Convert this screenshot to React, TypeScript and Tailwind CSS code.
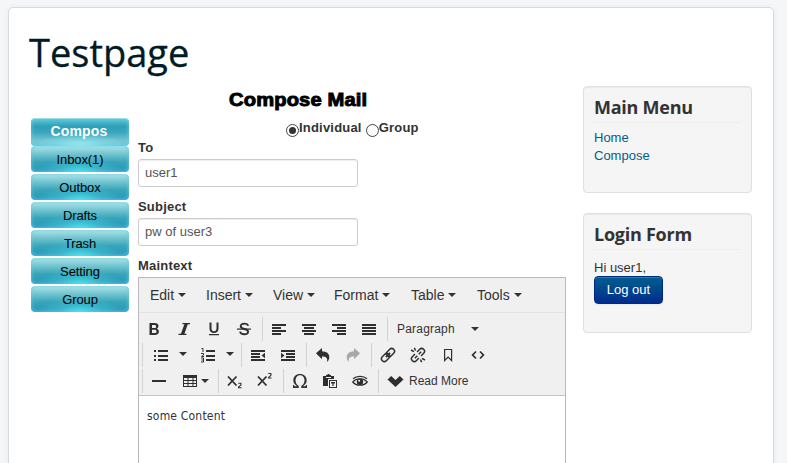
import type { ReactNode } from 'react';

const ink = '#2f2f2f';

function Svg({ children, w = 16, color = ink }: { children: ReactNode; w?: number; color?: string }) {
  return (
    <svg width={w} height={16} viewBox={`0 0 ${w} 16`} fill={color} className="block shrink-0" style={{ color }}>
      {children}
    </svg>
  );
}

function Caret({ className = '' }: { className?: string }) {
  return <span className={`block h-0 w-0 shrink-0 border-x-4 border-t-4 border-x-transparent border-t-[#333] ${className}`} />;
}

function Sep() {
  return <span className="ml-[3px] mr-px h-6 w-px shrink-0 bg-[#d2d2d2]" />;
}

function Cell({ children }: { children: ReactNode }) {
  return <button className="flex h-6 w-[30px] shrink-0 items-center justify-center">{children}</button>;
}

function Lines({ rows }: { rows: [number, number][] }) {
  return (
    <Svg>
      {rows.map(([x, w], i) => (
        <rect key={i} x={x} y={3 + i * 3} width={w} height={2} />
      ))}
    </Svg>
  );
}

function Indent({ inward }: { inward: boolean }) {
  return (
    <Svg>
      <path d="M1 3h14v2H1zM1 12h14v2H1z" />
      {inward ? (
        <path d="M6 6h9v2H6zM6 9h9v2H6zM1 5.7 4.5 8.5 1 11.3z" />
      ) : (
        <path d="M1 6h9v2H1zM1 9h9v2H1zM15 5.7 11.5 8.5 15 11.3z" />
      )}
    </Svg>
  );
}

const undoPath = 'M1 6.300 7 1v3.200c4.500.1 7.300 2.200 7.300 5.800 0 2.200-.9 3.900-2.300 5 .8-3.800-.6-5.500-5-5.500v2.800z';

const Undo = () => <Svg><path d={undoPath} /></Svg>;
const Redo = () => <Svg color="#a8a8a8"><path d={undoPath} transform="translate(16 0) scale(-1 1)" /></Svg>;

const Link = () => (
  <Svg>
    <g fill="none" stroke="currentColor" strokeWidth="1.500" transform="rotate(-45 8 8)">
      <rect x="0" y="5.200" width="9" height="5.600" rx="2.800" />
      <rect x="7" y="5.200" width="9" height="5.600" rx="2.800" />
      <path d="M5 8h6" />
    </g>
  </Svg>
);

const Unlink = () => (
  <Svg>
    <g fill="none" stroke="currentColor" strokeWidth="1.500">
      <g transform="rotate(-45 8 8)">
        <path d="M6.500 5.200H2.800a2.800 2.800 0 0 0 0 5.600h3.700M9.500 5.200h3.700a2.800 2.800 0 0 1 0 5.600H9.500M3.500 8h3.500M9 8h3.500" />
      </g>
      <path d="M1 3 4 4.700M4.300 .8l1.300 2.700M15 13 12 11.300M11.700 15.200l-1.300-2.700" />
    </g>
  </Svg>
);

const Table = () => (
  <Svg>
    <path fillRule="evenodd" d="M1 2h14v12H1zM2 5v2h3.500V5zM6.500 5v2h4V5zM11.500 5v2H14V5zM2 8v2h3.500V8zM6.500 8v2h4V8zM11.500 8v2H14V8zM2 11v2h3.500v-2zM6.500 11v2h4v-2zM11.500 11v2H14v-2z" />
  </Svg>
);

const Omega = () => (
  <Svg>
    <path d="M1 15v-3h1l.5 1.200H5C3 12 1.300 10 1.300 7.300 1.300 3.600 4.100 1 8 1s6.700 2.600 6.700 6.300c0 2.700-1.700 4.700-3.700 5.900h2.500L14 12h1v3H9.300v-2.200c1.900-.8 3.200-2.800 3.200-5.500 0-3-1.800-5.100-4.500-5.100S3.500 4.300 3.500 7.300c0 2.700 1.300 4.700 3.200 5.500V15z" />
  </Svg>
);

const Paste = () => (
  <Svg>
    <path fillRule="evenodd" d="M1 3h3V2h1.500V1h2v1H9v1h3v3H6v7H1zM4 4v1h5V4z" />
    <path fillRule="evenodd" d="M7 7h8v8H7zM8 8v6h6V8z" />
    <path d="M9 9h4v1.500h-1.400V13h-1.200v-2.500H9z" />
  </Svg>
);

const Eye = () => (
  <Svg>
    <path d="M.8 9C4 4.800 12 4.800 15.200 9 12 13.200 4 13.200.8 9Z" fill="none" stroke="currentColor" strokeWidth="1.300" />
    <path d="M1 5.800C4.500 2.500 11.500 2.500 15 5.800" fill="none" stroke="currentColor" strokeWidth="1.200" />
    <circle cx="8" cy="8.700" r="3.200" />
    <circle cx="7.200" cy="7.800" r="1" fill="#f0f0f0" />
  </Svg>
);

function Script({ sup }: { sup: boolean }) {
  return (
    <Svg>
      <path d="M1 3.500 9.500 12.500M9.500 3.500 1 12.500" stroke="currentColor" strokeWidth="1.800" />
      <path d="M11.300 1.200h2.600v1.900l-2.400 2v.6h3" transform={sup ? 'translate(0 -.7)' : 'translate(0 9)'} fill="none" stroke="currentColor" strokeWidth="1.100" />
    </Svg>
  );
}

const menu: [string, string][] = [
  ['Edit', 'w-14'], ['Insert', 'w-[67px]'], ['View', 'w-[61px]'],
  ['Format', 'w-[77px]'], ['Table', 'w-[66px]'], ['Tools', 'w-[64px]'],
];

function Editor() {
  return (
    <div className="h-[190px] w-[428px] border border-[#b9b9b9] bg-white">
      <div className="h-[118px] border-b border-[#c5c5c5] bg-[#f0f0f0] text-[#333]">
        <div className="flex h-[35px] items-center border-b border-[#e2e2e2] pl-[11px]">
          {menu.map(([name, width]) => (
            <button key={name} className={`flex shrink-0 items-center text-sm leading-5 ${width}`}>
              {name}
              <Caret className="ml-1" />
            </button>
          ))}
        </div>
        <div className="flex h-7 items-end">
          <Cell><Svg><path fillRule="evenodd" d="M3.500 2h5c2.500 0 4 1.100 4 3.100 0 1.200-.6 2.100-1.700 2.600 1.400.4 2.100 1.500 2.100 2.800 0 2.200-1.500 3.500-4.300 3.500H3.500zM6 3.900V7h2.400c1.200 0 1.800-.6 1.800-1.600s-.6-1.500-1.800-1.500zM6 8.800v3.300h2.600c1.300 0 1.900-.6 1.900-1.700s-.6-1.600-1.900-1.600z" /></Svg></Cell>
          <Cell><Svg><path d="M6.500 2H14v1.300h-2.200L8.400 12.700h2V14H2.500v-1.300h2.400L8.400 3.300H6.500z" /></Svg></Cell>
          <Cell><Svg><path d="M3.500 1.500h2v5.800c0 2 .8 3 2.500 3s2.500-1 2.500-3V1.500h2v5.900c0 2.900-1.600 4.500-4.500 4.500s-4.500-1.600-4.500-4.500zM3 13h10v1.300H3z" /></Svg></Cell>
          <Cell><Svg><path d="M12.200 4.800C11.500 2 4.700 1.600 4.700 5.200c0 3.800 7.400 1.800 7.400 5.500 0 3.700-7.400 3.300-8-.1" fill="none" stroke="currentColor" strokeWidth="1.900" /><path d="M1 7.500h14v1.200H1z" /></Svg></Cell>
          <Sep />
          <Cell><Lines rows={[[1, 14], [1, 9], [1, 14], [1, 9]]} /></Cell>
          <Cell><Lines rows={[[1, 14], [3, 10], [1, 14], [3, 10]]} /></Cell>
          <Cell><Lines rows={[[1, 14], [6, 9], [1, 14], [6, 9]]} /></Cell>
          <Cell><Lines rows={[[1, 14], [1, 14], [1, 14], [1, 14]]} /></Cell>
          <Sep />
          <button className="flex h-6 w-[92px] items-center justify-between pl-2 pr-0.5 text-xs tracking-[0.2px]">
            Paragraph
            <Caret />
          </button>
        </div>
        <div className="flex h-[26px] items-end">
          <Sep />
          <button className="flex h-6 w-[47px] items-center justify-between pl-[9px] pr-1">
            <Svg><path d="M1 3h2v2H1zM1 8h2v2H1zM1 12h2v2H1zM5 3h10v2H5zM5 8h10v2H5zM5 12h10v2H5z" /></Svg>
            <Caret className="-mt-0.5" />
          </button>
          <button className="flex h-6 w-[47px] items-center justify-between pl-[9px] pr-1">
            <Svg>
              <path d="M6 3h9v2H6zM6 8h9v2H6zM6 12h9v2H6z" />
              <path d="M1.500 1.500H3V5M1 6.500h2.500v1.500L1.500 9.500h2.500M1 11h2.500v4H1M1.500 13h2" fill="none" stroke="currentColor" strokeWidth="1" />
            </Svg>
            <Caret className="-mt-0.5" />
          </button>
          <Sep />
          <Cell><Indent inward={false} /></Cell>
          <Cell><Indent inward /></Cell>
          <Sep />
          <Cell><Undo /></Cell>
          <Cell><Redo /></Cell>
          <Sep />
          <Cell><Link /></Cell>
          <Cell><Unlink /></Cell>
          <Cell><Svg><path d="M4.600 2.500h7v11L8.100 10l-3.500 3.500z" fill="none" stroke="currentColor" strokeWidth="1.200" /></Svg></Cell>
          <Cell><Svg><path d="M6 4.500 2.600 8 6 11.500M10 4.500 13.400 8 10 11.500" fill="none" stroke="currentColor" strokeWidth="1.700" /></Svg></Cell>
        </div>
        <div className="flex h-[26px] items-end">
          <Sep />
          <Cell><Svg><path d="M1 7h14v2H1z" /></Svg></Cell>
          <button className="flex h-6 w-[41px] items-center gap-[3px] pl-2">
            <Table />
            <Caret />
          </button>
          <Sep />
          <Cell><Script sup={false} /></Cell>
          <Cell><Script sup /></Cell>
          <Sep />
          <Cell><Omega /></Cell>
          <Cell><Paste /></Cell>
          <Cell><Eye /></Cell>
          <Sep />
          <button className="flex h-6 items-center gap-[5px] pl-[7px] text-xs">
            <Svg w={17}><path d="m.5 6.500 3.700-3.500 4.300 4.100L12.800 3l3.700 3.500-8 7.500z" /></Svg>
            Read More
          </button>
        </div>
      </div>
      <p className="px-2 pt-3 font-['DejaVu_Sans_Condensed','DejaVu_Sans',sans-serif] text-[12px] leading-4 tracking-[0.2px] text-[#333]">some Content</p>
    </div>
  );
}

function Radio({ label, checked = false }: { label: string; checked?: boolean }) {
  return (
    <label className="flex items-start">
      <span className="mt-1.5 flex h-[13px] w-[13px] items-center justify-center rounded-full border border-[#444] bg-white">
        {checked && <span className="h-[7px] w-[7px] rounded-full bg-[#333]" />}
      </span>
      <span className="font-bold leading-5 tracking-[0.2px]">{label}</span>
    </label>
  );
}

function Field({ label, value }: { label: string; value: string }) {
  return (
    <label className="block h-[59px]">
      <span className="block font-bold leading-5 tracking-[0.2px]">{label}</span>
      <input
        defaultValue={value}
        className="mt-px block h-7 w-[220px] rounded-[3px] border border-[#ccc] bg-white px-1.5 pb-0.5 text-[13px] text-[#555] shadow-[inset_0_1px_1px_rgba(0,0,0,0.075)]"
      />
    </label>
  );
}

function Well({ title, height, bodyPad, children }: { title: string; height: string; bodyPad: string; children: ReactNode }) {
  return (
    <section className={`rounded border border-[#e0e0e0] bg-[#f5f5f5] px-2.5 pt-2 shadow-[inset_0_1px_1px_rgba(0,0,0,0.05)] ${height}`}>
      <h3 className="h-7 border-b border-[#eee] font-['Open_Sans',sans-serif] text-lg font-bold leading-[24px] tracking-[-0.25px] text-[#333]">{title}</h3>
      <div className={`leading-[18px] ${bodyPad}`}>{children}</div>
    </section>
  );
}

const folders = ['Inbox(1)', 'Outbox', 'Drafts', 'Trash', 'Setting', 'Group'];

export default function App() {
  return (
    <div className="h-[463px] w-[787px] overflow-hidden bg-[#f4f6f8] pl-2 pt-[7px] font-['Liberation_Sans',Arial,sans-serif] text-[13px] text-[#333]">
      <div className="h-[470px] w-[766px] rounded-[5px] border border-[#d9dadc] bg-white pl-5 shadow-[0_0_6px_rgba(0,0,0,0.05)]">
        <h1 className="h-[78px] pt-[22px] font-['Open_Sans',sans-serif] text-[38px] font-normal leading-[44px] text-[#001a27] [-webkit-text-stroke:0.3px_#001a27]">Testpage</h1>
        <div className="flex">
          <div className="w-[537px]">
            <h2 className="h-8 pl-[200px] pt-0.5 text-[18px] font-bold leading-[24px] text-black">
              <span className="inline-block origin-left scale-x-[1.12] tracking-[0.12px] [-webkit-text-stroke:0.9px_#000]">Compose Mail</span>
            </h2>
            <div className="flex pl-0.5">
              <nav className="flex w-[107px] flex-col gap-0.5 text-center text-black">
                <a className="-mb-0.5 block h-7 w-[98px] rounded-[4px] border-t border-[#9edce4] bg-[radial-gradient(ellipse_50%_45%_at_50%_100%,#a5f3fa_0%,#8be5ee88_50%,transparent_100%),linear-gradient(#50c4d5_0%,#2f9fb8_28%,#37a6bd_48%,#79c4d2_82%,#54cbdc_100%)] pr-0.5 text-sm font-bold leading-[25px] tracking-[0.2px] text-white shadow-[inset_0_0_5px_#6bd0de]">Compos</a>
                {folders.map((name) => (
                  <a key={name} className="block h-[26px] w-[98px] rounded-[4px] bg-[radial-gradient(ellipse_42%_55%_at_50%_100%,#46e5ed_0%,#44cddd77_50%,transparent_100%),linear-gradient(#b3e6eb_0%,#7ecbd5_24%,#37a4b9_62%,#2698c0_100%)] leading-[27px] tracking-[-0.1px] shadow-[inset_0_0_4px_#6bd0de]">{name}</a>
                ))}
              </nav>
              <main>
                <div className="flex h-5 gap-1 pl-[148px]">
                  <Radio label="Individual" checked />
                  <Radio label="Group" />
                </div>
                <Field label="To" value="user1" />
                <Field label="Subject" value="pw of user3" />
                <div className="h-[21px] font-bold leading-5 tracking-[0.2px]">Maintext</div>
                <Editor />
              </main>
            </div>
          </div>
          <aside className="ml-[17px] flex w-[169px] flex-col gap-5">
            <Well title="Main Menu" height="h-[107px]" bodyPad="pt-1.5">
              <a className="block text-[#005e8d]">Home</a>
              <a className="block text-[#005e8d]">Compose</a>
            </Well>
            <Well title="Login Form" height="h-[120px]" bodyPad="pt-[9px]">
              <div className="h-[17px]">Hi user1,</div>
              <button className="block h-7 w-[69px] rounded border border-[#002a80] bg-linear-to-b from-[#005e8d] to-[#002a8d] text-white shadow-[inset_0_1px_0_rgba(255,255,255,0.2),0_1px_2px_rgba(0,0,0,0.05)]">Log out</button>
            </Well>
          </aside>
        </div>
      </div>
    </div>
  );
}
